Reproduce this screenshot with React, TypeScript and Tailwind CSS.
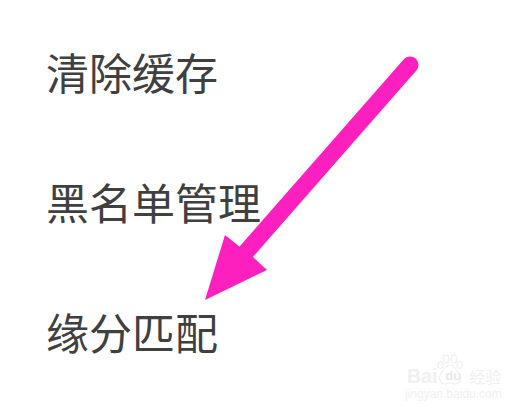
const rows = ["清除缓存", "黑名单管理", "缘分匹配"];

function Arrow() {
  return (
    <svg className="pointer-events-none absolute inset-0" width="528" height="412" viewBox="0 0 528 412">
      <line x1="410" y1="65" x2="246" y2="252" stroke="#fd20bf" strokeWidth="17" strokeLinecap="round" />
      <polygon points="205,300 225,235 240,247 253,257 267,270" fill="#fd20bf" />
    </svg>
  );
}

function Watermark() {
  return (
    <div className="absolute left-[404px] top-[354px] flex w-[120px] flex-col items-start pl-[3px] text-[#f0f0f0]">
      <svg className="absolute left-[33px] top-0" width="26" height="32" viewBox="0 0 26 32" fill="none" stroke="#efefef" strokeWidth="1.2">
        <ellipse cx="3.5" cy="11" rx="2.5" ry="3.5" />
        <ellipse cx="9" cy="5" rx="2.8" ry="4" />
        <ellipse cx="17" cy="5" rx="2.8" ry="4" />
        <ellipse cx="22.5" cy="11" rx="2.5" ry="3.5" />
        <path d="M13 11c-4 0-5 4-8 7-4 4-3 12 3 12 2 0 3-1 5-1s3 1 5 1c6 0 7-8 3-12-3-3-4-7-8-7z" />
      </svg>
      <div className="flex items-center pt-[9px]">
        <span className="font-['Liberation_Sans',sans-serif] text-[19.5px] leading-[26px] font-bold">Bai</span>
        <span className="ml-[8px] font-['Liberation_Sans',sans-serif] text-[13px] leading-[26px] font-bold text-[#e8e8e8]">du</span>
        <span className="ml-[8px] font-['Noto_Sans_CJK_SC',sans-serif] text-[16px] leading-[26px]">经验</span>
      </div>
      <span className="-mt-[2px] -ml-[2px] font-['Liberation_Sans',sans-serif] text-[12px] leading-[14px]">jingyan.baidu.com</span>
    </div>
  );
}

export default function App() {
  return (
    <div className="relative h-[412px] w-[528px] overflow-hidden bg-white font-['Noto_Sans_CJK_SC','Noto_Sans',sans-serif]">
      <div className="flex flex-col pt-[6px] pl-[46px]">
        {rows.map((row) => (
          <div key={row} className="flex h-[130px] items-center text-[43px] text-[#404040]">
            {row}
          </div>
        ))}
      </div>
      <Arrow />
      <Watermark />
    </div>
  );
}
